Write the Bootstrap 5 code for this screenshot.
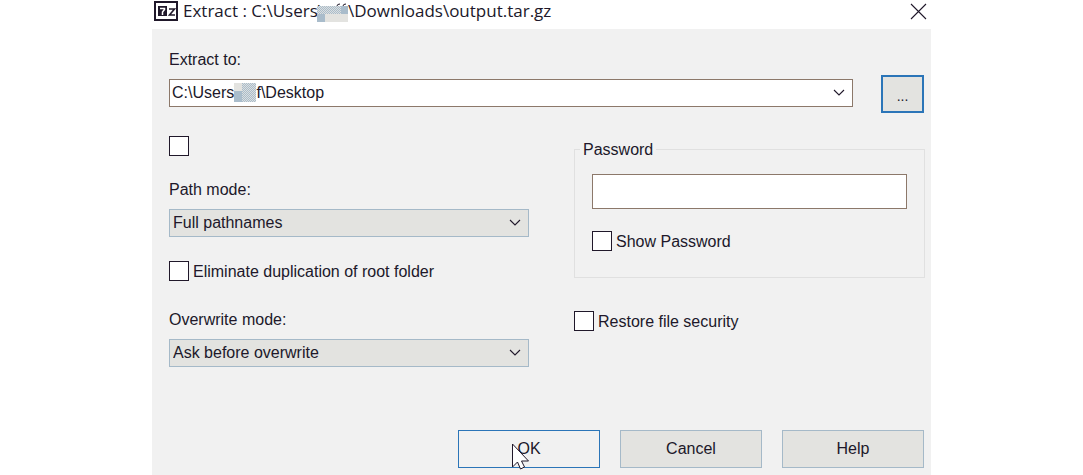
<!DOCTYPE html>
<html lang="en">
<head>
<meta charset="utf-8">
<meta name="viewport" content="width=device-width, initial-scale=1">
<title>Extract</title>
<link href="https://cdn.jsdelivr.net/npm/bootstrap@5.3.0/dist/css/bootstrap.min.css" rel="stylesheet">
<style>
  body { font-family: "Liberation Sans", Arial, sans-serif; font-size: 16px; line-height: 20px; color: #20182a; background: #fff; }
  .dialog { max-width: 779px; }
  .titlebar { height: 29px; padding: 0 4px 7px 2px; font-family: "Open Sans", "Segoe UI", sans-serif; font-size: 17px; line-height: 24px; }
  .titlebar h1 { font: inherit; white-space: pre; }
  .mosaic-title { margin-left: -7px; }
  .client { background: #f1f1f1; padding: 21px 7px 7px 17px; }
  .close-btn { line-height: 0; }
  .path-row { gap: 28px; margin-top: 5px; }
  .combo { padding-bottom: 2px; }
  .form-control, .form-select { height: 28px; padding: 0 3px; border-radius: 0; font-size: 16px; line-height: 20px; color: #20182a; border-color: #8c786a; }
  .combo .form-control { padding-left: 2px; }
  .combo-arrow { right: 8px; top: 10px; }
  .form-select { border-color: #a5b9c8; background-color: #e3e3e0; background-position: right 7px center; background-size: 12px 8px;
    background-image: url("data:image/svg+xml,%3Csvg xmlns='http://www.w3.org/2000/svg' viewBox='0 0 12 8'%3E%3Cpath d='M1 1l5 5 5-5' fill='none' stroke='%2320182a' stroke-width='1.1'/%3E%3C/svg%3E"); }
  .btn { --bs-btn-border-radius: 0; --bs-btn-font-size: 16px; --bs-btn-line-height: 20px; --bs-btn-padding-x: 0; --bs-btn-padding-y: 0;
    --bs-btn-color: #20182a; --bs-btn-bg: #e3e3e0; --bs-btn-border-color: #a5b9c8; --bs-btn-hover-border-color: #2b75b8; --bs-btn-hover-bg: #e5eef6; height: 38px; }
  .btn-browse { width: 43px; --bs-btn-font-size: 14px; --bs-btn-border-width: 2px; --bs-btn-border-color: #2b75b8; }
  .btn-ok { --bs-btn-bg: #f1f1f1; --bs-btn-border-color: #2b75b8; }
  .columns { display: grid; grid-template-columns: 360fr 351fr; column-gap: 45px; margin: 23px -1px 0 0; }
  .form-check-input { width: 20px; height: 20px; margin: 0; border-color: #20182a; background-color: #fff; }
  .form-check-input[type=checkbox] { border-radius: 0; }
  .tick { gap: 4px; height: 20px; }
  .tick label { padding-top: 1px; }
  .stack { gap: 24px; }
  .field { gap: 9px; }
  .tick + .field { margin-top: 5px; }
  .group { border: 1px solid #e0e0e0; height: 129px; padding: 24px 17px 0; margin-top: 13px; }
  .group legend { float: none; width: auto; font-size: 16px; line-height: 20px; margin: 0; padding: 0 3px; top: -10px; left: 5px; background: #f1f1f1; }
  .group .form-control { height: 35px; margin-bottom: 22px; }
  .restore { margin-top: 33px; }
  .actions { display: grid; grid-template-columns: repeat(3, 142px); gap: 20px; margin-top: 63px; }
  .cursor { left: 53px; top: 12px; }
  .mosaic-path { left: 65px; top: 4px; }
</style>
</head>
<body>
<main class="dialog mx-auto min-vh-100 d-flex flex-column">
  <header class="titlebar d-flex align-items-center">
    <svg class="me-1" width="25" height="20" viewBox="0 0 25 20" aria-hidden="true"><path d="M1 1h22v18H1z" fill="#fff" stroke="#20182a" stroke-width="2"/><path d="M4 5h9v10H4z" fill="#20182a"/><path d="M6 7.5h4.500v1L8.500 11v3" fill="none" stroke="#fff" stroke-width="1.500"/><path d="M15 8h5.500l-5 6H21" fill="none" stroke="#20182a" stroke-width="1.600"/></svg>
    <h1 class="m-0">Extract : C:\Users\<svg class="mosaic-title" width="31" height="19" viewBox="0 0 31 19" aria-hidden="true"><defs><pattern id="dots" width="2" height="2" patternUnits="userSpaceOnUse"><path d="M0 0h2v2H0z" fill="#dcdfdf"/><path d="M0 0h1v1H0zM1 1h1v1H1z" fill="#a9bccb"/></pattern></defs><path d="M0 3h31v16H0z" fill="#e3e3e0"/><path d="M0 3h24v8H0z" fill="url(#dots)"/><path d="M24 3h7v8h-7zM0 11h8v8H0z" fill="#a9bccb"/><path d="M20 3q0-2 3-2M26 3q0-2 3-2" fill="none" stroke="#20182a"/></svg>\Downloads\output.tar.gz</h1>
    <button type="button" class="close-btn ms-auto border-0 bg-transparent p-0" aria-label="Close"><svg width="17" height="17" viewBox="0 0 17 17"><path d="M1 1l15 15M16 1L1 16" stroke="#20182a" stroke-width="1.1"/></svg></button>
  </header>
  <form class="client flex-grow-1">
    <label for="path">Extract to:</label>
    <div class="path-row d-flex align-items-center">
      <div class="combo position-relative flex-grow-1">
        <input id="path" class="form-control" type="text" value="C:\Users\    f\Desktop">
        <svg class="mosaic-path position-absolute" width="22" height="19" viewBox="0 0 22 19" aria-hidden="true"><path d="M0 0h8v8H0z" fill="#e3e3e0"/><path d="M0 8h8v11H0z" fill="#a9bccb"/><path d="M8 0h14v19H8z" fill="url(#dots)"/></svg>
        <svg class="combo-arrow position-absolute" width="12" height="8" viewBox="0 0 12 8" aria-hidden="true"><path d="M1 1l5 5 5-5" fill="none" stroke="#20182a" stroke-width="1.1"/></svg>
      </div>
      <button type="button" class="btn btn-browse pt-1" aria-label="Browse">...</button>
    </div>
    <div class="columns">
      <div class="d-flex flex-column stack">
        <div class="d-flex"><input class="form-check-input" type="checkbox" aria-label="Use subfolder"></div>
        <div class="d-flex flex-column field">
          <label for="pathmode">Path mode:</label>
          <select id="pathmode" class="form-select"><option>Full pathnames</option></select>
        </div>
        <div class="d-flex tick"><input id="dup" class="form-check-input" type="checkbox"><label for="dup">Eliminate duplication of root folder</label></div>
        <div class="d-flex flex-column field">
          <label for="overmode">Overwrite mode:</label>
          <select id="overmode" class="form-select"><option>Ask before overwrite</option></select>
        </div>
      </div>
      <div>
        <fieldset class="group position-relative">
          <legend class="position-absolute">Password</legend>
          <input class="form-control" type="password" aria-label="Password">
          <div class="d-flex tick"><input id="show" class="form-check-input" type="checkbox"><label for="show">Show Password</label></div>
        </fieldset>
        <div class="d-flex tick restore"><input id="sec" class="form-check-input" type="checkbox"><label for="sec">Restore file security</label></div>
      </div>
    </div>
    <div class="actions justify-content-end">
      <button type="button" class="btn btn-ok position-relative">OK<svg class="cursor position-absolute" width="18" height="27" viewBox="0 0 18 27" aria-hidden="true"><path d="M.5 1v23l5-5 3 7 4-2-3-6h7z" fill="#fff" stroke="#20182a"/></svg></button>
      <button type="button" class="btn">Cancel</button>
      <button type="button" class="btn">Help</button>
    </div>
  </form>
</main>
<script src="https://cdn.jsdelivr.net/npm/bootstrap@5.3.0/dist/js/bootstrap.bundle.min.js"></script>
</body>
</html>
